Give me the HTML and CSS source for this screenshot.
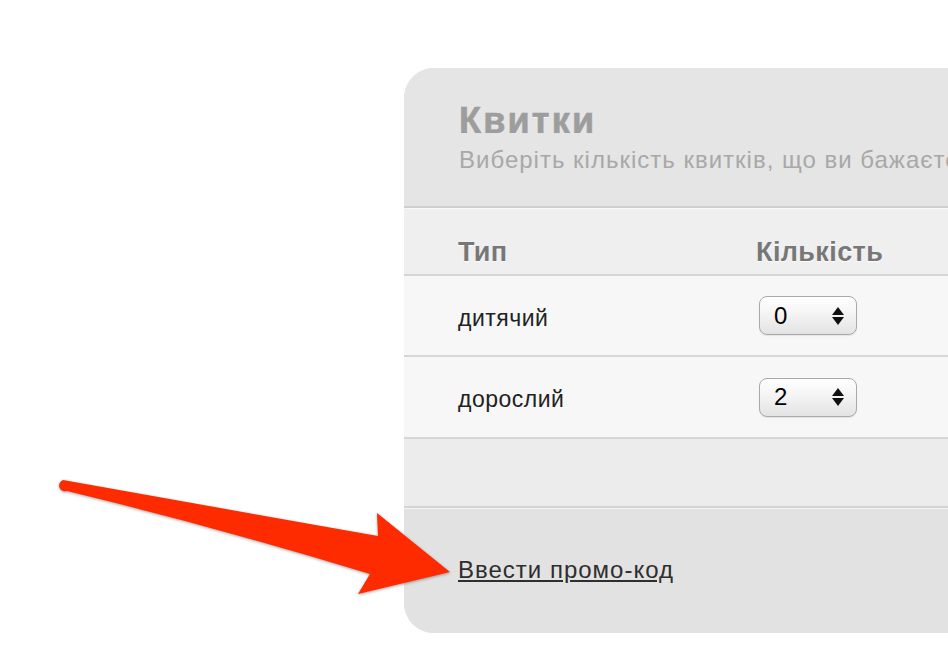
FILE: index.html
```html
<!DOCTYPE html>
<html lang="uk">
<head>
<meta charset="utf-8">
<title>Квитки</title>
<link rel="stylesheet" href="styles.css">
</head>
<body>
<div class="page">
  <section class="panel">
    <header class="panel-head">
      <h1 class="title">Квитки</h1>
      <p class="subtitle">Виберіть кількість квитків, що ви бажаєте придбати</p>
    </header>
    <div class="row row-head">
      <div class="cell">Тип</div>
      <div class="cell">Кількість</div>
    </div>
    <div class="row row-item">
      <div class="cell label">дитячий</div>
      <div class="cell"><div class="select"><span class="val">0</span><span class="arrows"><span class="up"></span><span class="down"></span></span></div></div>
    </div>
    <div class="row row-item row-last">
      <div class="cell label">дорослий</div>
      <div class="cell"><div class="select"><span class="val">2</span><span class="arrows"><span class="up"></span><span class="down"></span></span></div></div>
    </div>
    <div class="spacer"></div>
    <footer class="panel-foot">
      <a class="promo" href="#">Ввести промо-код</a>
    </footer>
  </section>
</div>
<svg class="annot" width="948" height="654" viewBox="0 0 948 654" aria-hidden="true">
  <path class="arrow" d="M63,480 Q220,508 378,536 L377,513 L450,572 L358,594 L370,574 Q220,528 67,491 A5.5,5.5 0 0 1 63,480 Z"/>
</svg>
</body>
</html>
```

FILE: styles.css
```css
html, body {
  margin: 0;
  padding: 0;
  background: #ffffff;
  overflow: hidden;
}
body {
  width: 948px;
  height: 654px;
  position: relative;
  font-family: "Liberation Sans", Arial, Helvetica, sans-serif;
}
.page {
  padding-top: 68px;
  padding-left: 404px;
}
.panel {
  width: 700px;
  border-radius: 30px 0 0 30px;
  overflow: hidden;
  background: #e2e2e2;
}
.panel-head {
  background: #e5e5e5;
  height: 140px;
  box-sizing: border-box;
  padding: 33px 0 0 55px;
  border-bottom: 2px solid #cfcfcf;
}
.title {
  margin: 0;
  font-size: 36px;
  line-height: 40px;
  font-weight: bold;
  color: #9d9d9d;
  text-shadow: 0 1px 0 #ffffff;
  letter-spacing: 2.2px;
  -webkit-text-stroke: 0.7px #9d9d9d;
}
.subtitle {
  margin: 6px 0 0;
  font-size: 24px;
  line-height: 26px;
  letter-spacing: 1px;
  color: #a8a8a8;
  white-space: nowrap;
}
.row {
  display: grid;
  grid-template-columns: 298px 1fr;
  align-items: center;
  padding-left: 54px;
  border-bottom: 2px solid #d6d6d6;
  border-top: 1px solid #f9f9f9;
  box-sizing: border-box;
}
.row-head {
  height: 68px;
  background: #efefef;
  padding-top: 20px;
}
.row-head .cell {
  font-size: 27px;
  line-height: 30px;
  letter-spacing: 0.4px;
  font-weight: bold;
  color: #777777;
  text-shadow: 0 1px 0 #ffffff;
}
.row-item {
  height: 81px;
  background: #f7f7f7;
  border-top: 0;
}
.row-last {
  height: 82px;
}
.label {
  font-size: 23px;
  letter-spacing: 0.5px;
  color: #222222;
  padding-top: 5px;
}
.select {
  margin-left: 3px;
  width: 98px;
  height: 39px;
  box-sizing: border-box;
  border: 1px solid #a9a9a9;
  border-radius: 8px;
  background: linear-gradient(#ffffff 0%, #f4f4f4 45%, #e3e3e3 100%);
  box-shadow: inset 0 1px 0 #ffffff, 0 1px 1px rgba(0,0,0,0.08);
  display: flex;
  align-items: center;
  justify-content: space-between;
  padding: 0 12px 0 14px;
  font-size: 24px;
  color: #000000;
}
.arrows {
  display: flex;
  flex-direction: column;
  gap: 2px;
}
.up, .down {
  width: 0;
  height: 0;
  border-left: 6px solid transparent;
  border-right: 6px solid transparent;
}
.up { border-bottom: 8px solid #111111; }
.down { border-top: 8px solid #111111; }
.spacer {
  height: 69px;
  box-sizing: border-box;
  background: #ececec;
  border-bottom: 2px solid #d4d4d4;
}
.panel-foot {
  height: 125px;
  box-sizing: border-box;
  background: #e2e2e2;
  padding: 46px 0 0 54px;
  border-top: 1px solid #f4f4f4;
}
.promo {
  font-size: 24px;
  line-height: 30px;
  letter-spacing: 1px;
  color: #2e2e2e;
  text-decoration: underline;
  text-underline-offset: 2px;
}
.annot {
  position: absolute;
  left: 0;
  top: 0;
  pointer-events: none;
}
.arrow {
  fill: #fe2a00;
  filter: drop-shadow(0 1px 1.5px rgba(0,0,0,0.35));
}
```
